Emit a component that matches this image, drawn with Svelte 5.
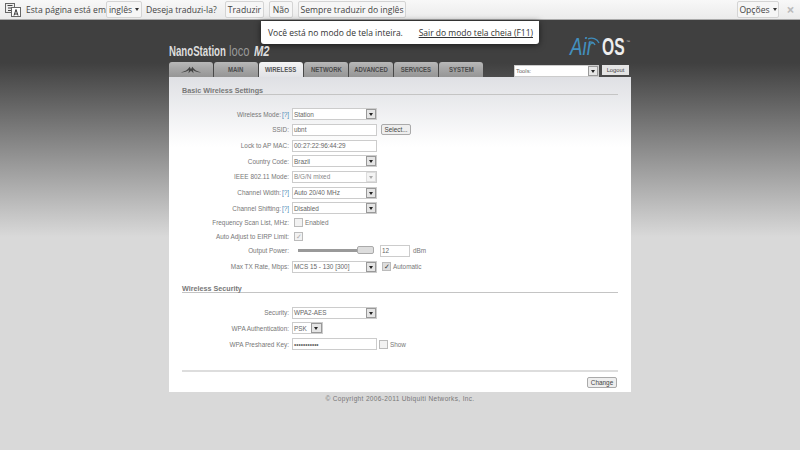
<script>
  const tabs = ['MAIN', 'WIRELESS', 'NETWORK', 'ADVANCED', 'SERVICES', 'SYSTEM'];
</script>

<div class="page">
  <header class="translate">
    <svg class="tr-icon" width="16" height="14" viewBox="0 0 16 14">
      <rect x="0.500" y="0.500" width="9" height="9" fill="#eee" stroke="#666"/>
      <rect x="6.500" y="4.500" width="9" height="9" fill="#fff" stroke="#666"/>
      <path d="M2.500 2.500h5M3 5h3M3 7.500h3" stroke="#444" fill="none"/>
      <path d="M9 12.500l2-6 2 6M9.800 11h2.400" stroke="#333" fill="none"/>
    </svg>
    <span class="t-a">Esta página está em</span>
    <span class="tbtn lang">inglês <i class="caret"></i></span>
    <span class="t-b">Deseja traduzi-la?</span>
    <span class="tbtn b1">Traduzir</span>
    <span class="tbtn b2">Não</span>
    <span class="tbtn b3">Sempre traduzir do inglês</span>
    <span class="tbtn opts">Opções <i class="caret"></i></span>
    <span class="close">×</span>
  </header>

  <div class="toast">
    <span>Você está no modo de tela inteira.</span>
    <span class="exit">Sair do modo tela cheia (F11)</span>
  </div>

  <main class="wrap">
    <div class="brand">
      <div class="product"><span class="ns">NanoStation</span><span class="loco">loco</span><span class="m2">M2</span></div>
      <div class="airos">
        <svg class="wifi" width="14" height="10" viewBox="0 0 14 10">
          <path d="M1 2a8 8 0 0 1 11 4M2 5a5 5 0 0 1 6 3" stroke="#3f8dbd" stroke-width="1.300" fill="none"/>
        </svg>
        <span class="air">Air</span><span class="os">OS</span><span class="tm">™</span>
      </div>
    </div>

    <nav class="tabbar">
      <div class="tab logo-tab">
        <svg width="22" height="8" viewBox="0 0 34 10" preserveAspectRatio="none">
          <path d="M1 8 C8 7 12 5 15 1 L17 4 L19 1 C22 5 26 7 33 8 C27 8 23 7 20 5 L21 9 L17 6 L13 9 L14 5 C11 7 7 8 1 8Z" fill="#444"/>
        </svg>
      </div>
      {#each tabs as t}
        <div class="tab" class:active={t === 'WIRELESS'}><span>{t}</span></div>
      {/each}
      <div class="tools">
        <div class="sel tools-sel"><span>Tools:</span><b class="arrow"></b></div>
        <button class="logout">Logout</button>
      </div>
    </nav>

    <section class="panel">
      <h2>Basic Wireless Settings</h2>
      <div class="rows">
        <div class="row"><label class="help">Wireless Mode:<em>[?]</em></label><div class="sel"><span>Station</span><b class="arrow"></b></div></div>
        <div class="row"><label>SSID:</label><div class="inp">ubnt</div><button class="btn select">Select...</button></div>
        <div class="row"><label>Lock to AP MAC:</label><div class="inp">00:27:22:96:44:29</div></div>
        <div class="row"><label>Country Code:</label><div class="sel"><span>Brazil</span><b class="arrow"></b></div></div>
        <div class="row"><label>IEEE 802.11 Mode:</label><div class="sel off"><span>B/G/N mixed</span><b class="arrow"></b></div></div>
        <div class="row"><label class="help">Channel Width:<em>[?]</em></label><div class="sel"><span>Auto 20/40 MHz</span><b class="arrow"></b></div></div>
        <div class="row"><label class="help">Channel Shifting:<em>[?]</em></label><div class="sel"><span>Disabled</span><b class="arrow"></b></div></div>
        <div class="row tight"><label>Frequency Scan List, MHz:</label><span class="chk"></span><span class="note">Enabled</span></div>
        <div class="row tight"><label>Auto Adjust to EIRP Limit:</label><span class="chk off">✓</span></div>
        <div class="row"><label>Output Power:</label><div class="slider"><span class="thumb"></span></div><div class="inp num">12</div><span class="note dbm">dBm</span></div>
        <div class="row"><label>Max TX Rate, Mbps:</label><div class="sel"><span>MCS 15 - 130 [300]</span><b class="arrow"></b></div><span class="chk on">✓</span><span class="note">Automatic</span></div>
      </div>

      <h2 class="second">Wireless Security</h2>
      <div class="rows">
        <div class="row"><label>Security:</label><div class="sel"><span>WPA2-AES</span><b class="arrow"></b></div></div>
        <div class="row"><label>WPA Authentication:</label><div class="sel small"><span>PSK</span><b class="arrow"></b></div></div>
        <div class="row"><label>WPA Preshared Key:</label><div class="inp">•••••••••••</div><span class="chk show"></span><span class="note">Show</span></div>
      </div>

      <div class="foot"><button class="btn change">Change</button></div>
    </section>

    <footer class="copy">© Copyright 2006-2011 Ubiquiti Networks, Inc.</footer>
  </main>
</div>

<style>
  :global(body) { margin: 0; }
  .page {
    width: 800px; height: 450px; position: relative; overflow: hidden;
    background: linear-gradient(#404040 63px, #d9d9d9 237px);
    font-family: "Liberation Sans", Arial, sans-serif;
    font-size: 6.400px; color: #777;
  }
  .translate {
    height: 20px; box-sizing: border-box; border-bottom: 1px solid #aaa;
    background: linear-gradient(#f8f8f8, #ebebeb);
    display: flex; align-items: center; padding: 0 0 0 5px;
    font-family: "Open Sans", sans-serif; font-size: 8.600px; color: #444;
  }
  .tr-icon { margin-right: 5px; flex: none; }
  .tbtn {
    height: 17px; box-sizing: border-box; border: 1px solid #d4d4d4; border-radius: 2px;
    background: #f6f6f6; display: flex; align-items: center; justify-content: center;
    white-space: nowrap;
  }
  .t-a { width: 80px; white-space: nowrap; flex: none; }
  .lang { width: 36px; gap: 3px; flex: none; }
  .t-b { margin-left: 4px; width: 79px; white-space: nowrap; flex: none; }
  .b1 { width: 39px; }
  .b2 { width: 24px; margin-left: 5px; }
  .b3 { width: 108px; margin-left: 5px; }
  .opts { width: 42px; margin-left: auto; gap: 3px; }
  .close { width: 21px; padding-left: 2px; box-sizing: border-box; text-align: center; color: #bbb; font-size: 14px; font-weight: bold; }
  .caret { border: 2.500px solid transparent; border-top: 3px solid #333; border-bottom: 0; display: inline-block; }

  .toast {
    position: absolute; left: 261px; top: 21px; width: 278px; height: 23px; box-sizing: border-box;
    background: #fff; border-radius: 0 0 3px 3px; box-shadow: 0 1px 6px rgba(0,0,0,.6);
    display: flex; justify-content: space-between; align-items: center; padding: 0 6px 0 7px;
    font-family: "Open Sans", sans-serif; font-size: 8.500px; color: #333; white-space: nowrap;
  }
  .exit { text-decoration: underline; }

  .wrap { width: 462px; margin-left: 169px; }
  .brand { height: 38px; display: flex; justify-content: space-between; align-items: flex-end; }
  .product { color: #ddd; font-size: 14px; line-height: 14px; display: flex; align-items: baseline; white-space: nowrap; }
  .ns, .loco, .m2, .air, .os { display: block; transform-origin: left center; white-space: nowrap; }
  .ns { width: 60px; font-weight: 700; transform: scaleX(.69); }
  .loco { width: 25px; font-weight: 400; color: #999; transform: scaleX(.8); }
  .m2 { width: 16px; font-style: italic; font-weight: 700; transform: scaleX(.8); }
  .airos { position: relative; display: flex; align-items: baseline; height: 26px; margin-bottom: -2px; padding-right: 1px; }
  .air { width: 32px; color: #4390bf; font-style: italic; font-size: 24px; line-height: 26px; transform: scaleX(.78); }
  .os { width: 24px; font-size: 24px; line-height: 26px; font-weight: 700; color: #eee; transform: scaleX(.65); }
  .tm { font-size: 4px; align-self: flex-start; margin-top: 5px; color: #ccc; }
  .wifi { position: absolute; left: 17px; top: 3px; }

  .tabbar { height: 15px; display: flex; gap: 1px; align-items: flex-end; margin-top: 4px; }
  .tab {
    height: 15px; box-sizing: border-box; width: 44px; background: linear-gradient(#b8b8b8, #a8a8a8 40%, #959595);
    color: #4a4a4a; font: 700 7.500px/15px "Liberation Sans", sans-serif; text-align: center;
    border-radius: 3px 3px 0 0;
  }
  .tab span { display: inline-block; transform: scaleX(.8); white-space: nowrap; }
  .logo-tab { display: flex; align-items: center; justify-content: center; }
  .tab.active { background: linear-gradient(#f4f4f4, #e1e2e6); color: #555; }
  .tools { margin-left: auto; display: flex; gap: 3px; padding-right: 2px; align-items: flex-start; height: 15px; padding-top: 3px; box-sizing: border-box; }
  .tools-sel { width: 86px; height: 10px; background: #fff; border: 0; font-size: 5.800px; color: #666; padding-left: 4px; }
  .logout { width: 27px; height: 10px; padding: 0; border: 0; background: #e4e4e4; font: 5.800px "Liberation Sans", sans-serif; color: #444; }

  .panel {
    width: 462px; height: 315px; box-sizing: border-box; padding: 0 13px;
    background: linear-gradient(#dfe0e4, #fff 70px);
    position: relative;
  }
  h2 {
    margin: 0; padding-top: 8.500px; height: 18px; box-sizing: border-box; font-size: 7.200px; color: #777; font-weight: bold;
    border-bottom: 1px solid #c4c4c4; line-height: 9px;
  }
  .second { margin-top: 1px; }
  .rows { padding-top: 11.500px; }
  .row { height: 15.670px; display: flex; align-items: center; }
  .row.tight { height: 13.500px; }
  .row label { width: 107px; flex: none; text-align: right; margin-right: 3px; white-space: nowrap; box-sizing: border-box; }
  .row label.help { padding-right: 8px; position: relative; }
  .row em { color: #3f86b4; font-style: normal; position: absolute; right: 0; top: 0; }
  .sel, .inp {
    width: 85px; height: 12px; box-sizing: border-box; border: 1px solid #ccc; background: #fff;
    display: flex; align-items: center; padding-left: 1px; flex: none; color: #666;
  }
  .sel span { flex: 1; }
  .arrow {
    width: 10px; height: 10px; background: #e5e5e5; border: 1px solid #999; box-sizing: border-box; flex: none;
    position: relative; display: block;
  }
  .arrow::after { content: ''; position: absolute; left: 2px; top: 3px; border: 2px solid transparent; border-top: 3px solid #222; border-bottom: 0; }
  .off { color: #888; }
  .off .arrow { border-color: #ddd; background: #f4f4f4; }
  .off .arrow::after { border-top-color: #aaa; }
  .small { width: 31px; }
  .small .arrow { width: 11px; }
  .btn { height: 11px; padding: 0; border: 1px solid #aaa; border-radius: 2px; background: #eee; font: 6.400px "Liberation Sans", sans-serif; color: #444; }
  .select { width: 30px; margin-left: 4px; }
  .chk { width: 9px; height: 9px; box-sizing: border-box; border: 1px solid #bbb; background: #f2f2f2; margin-left: 2px; font-size: 7px; line-height: 7px; text-align: center; color: #aaa; flex: none; }
  .chk.on { color: #333; margin-left: 5px; background: #ddd; }
  .chk.show { margin-left: 2px; }
  .note { margin-left: 2px; }
  .slider { width: 75px; height: 3px; background: #999; margin: 0 7px 0 6px; position: relative; flex: none; }
  .thumb { position: absolute; right: -1px; top: -3px; width: 17px; height: 8px; background: #ddd; border: 1px solid #aaa; border-radius: 2px; box-sizing: border-box; }
  .num { width: 30px; }
  .dbm { margin-left: 3px; }
  .foot { position: absolute; left: 13px; right: 13px; bottom: 0; height: 22px; border-top: 2px solid #ddd; box-sizing: border-box; display: flex; justify-content: flex-end; align-items: center; padding-right: 1px; }
  .change { width: 30px; height: 11px; }
  .copy { text-align: center; font-size: 6.500px; color: #777; line-height: 13px; letter-spacing: .35px; }
</style>
